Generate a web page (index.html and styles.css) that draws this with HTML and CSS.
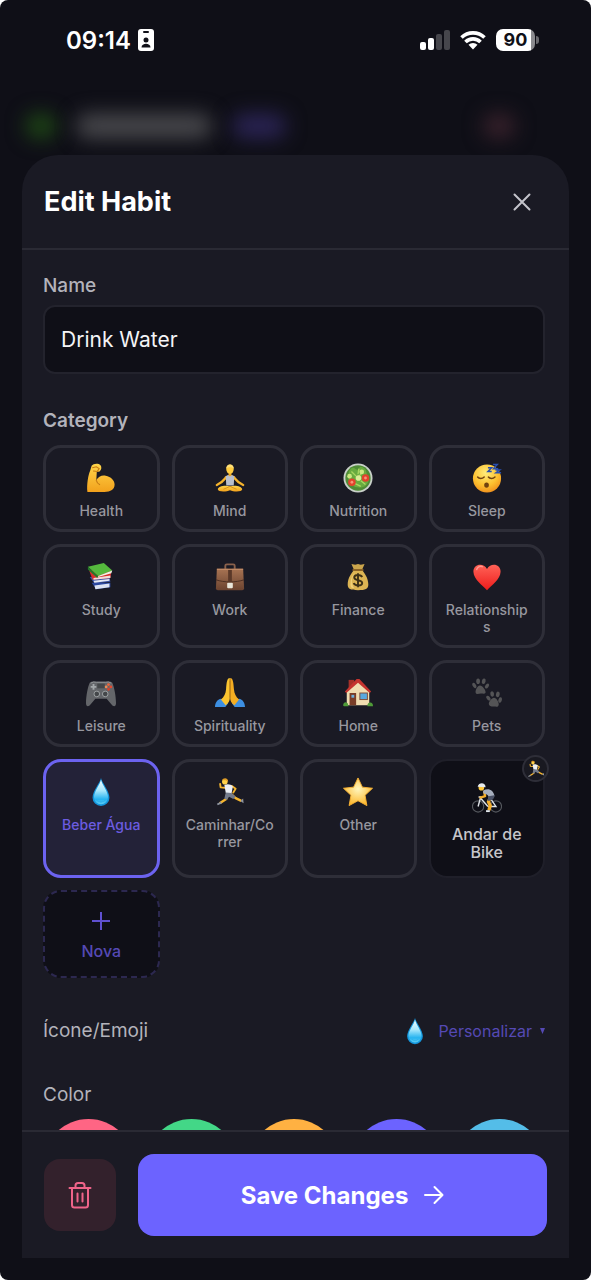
FILE: index.html
```
<!DOCTYPE html>
<html lang="en">
<head>
	<meta charset="UTF-8">
	<meta name="viewport" content="width=device-width, initial-scale=1">
	<title>Edit Habit</title>
	<link rel="stylesheet" href="styles.css">
</head>
<body>
	<!-- gradients and emoji used more than once -->
	<svg class="defs" aria-hidden="true">
		<defs>
			<linearGradient id="skin" x1="0" y1="0" x2="0" y2="1">
				<stop offset="0" stop-color="#ffd54a"/>
				<stop offset="1" stop-color="#f2a11c"/>
			</linearGradient>
			<linearGradient id="water" x1="0" y1="0" x2="0" y2="1">
				<stop offset="0" stop-color="#f2fdff"/>
				<stop offset="0.45" stop-color="#a5e6fb"/>
				<stop offset="0.8" stop-color="#25b3f0"/>
				<stop offset="1" stop-color="#5ccdf5"/>
			</linearGradient>
			<linearGradient id="heart" x1="0" y1="0" x2="0" y2="1">
				<stop offset="0" stop-color="#ff6257"/>
				<stop offset="1" stop-color="#ee1c1b"/>
			</linearGradient>
			<linearGradient id="leather" x1="0" y1="0" x2="0" y2="1">
				<stop offset="0" stop-color="#a87453"/>
				<stop offset="1" stop-color="#6b4330"/>
			</linearGradient>
			<radialGradient id="star" cx="0.5" cy="0.4" r="0.6">
				<stop offset="0" stop-color="#fff6bd"/>
				<stop offset="1" stop-color="#fcb72b"/>
			</radialGradient>
			<radialGradient id="face" cx="0.45" cy="0.3" r="0.75">
				<stop offset="0" stop-color="#ffec7a"/>
				<stop offset="0.6" stop-color="#fdc02f"/>
				<stop offset="1" stop-color="#ee8a1b"/>
			</radialGradient>
		</defs>
		<symbol id="drop" viewBox="0 0 32 32">
			<path d="M16 1C17 6 25 15 25 22a9 9 0 0 1-18 0C7 15 15 6 16 1z" fill="#1596dc"/>
			<path d="M16 3c1 5 7.500 12.500 7.500 18.500a7.500 7.500 0 0 1-15 0C8.500 15.500 15 8 16 3z" fill="url(#water)"/>
			<path d="M10.500 23.500c2 4.500 9 4.500 11 0-1 2-3 3-5.500 3s-4.500-1-5.500-3z" fill="#0f8fdb"/>
		</symbol>
		<symbol id="runner" viewBox="0 0 32 32">
			<path d="M13 18l-1 5.500-7 4.500" fill="none" stroke="#f5b52e" stroke-width="2.500" stroke-linejoin="round"/>
			<path d="M17 18l5 4.500 6 3" fill="none" stroke="#f5b52e" stroke-width="2.500" stroke-linejoin="round"/>
			<path d="M2 28.500l4-2 1.500 1.500-4.500 2zM27 25.500l3-2.500.5 5z" fill="#8f95a0"/>
			<path d="M11 11.500l-5-.5-.5-3.500M18 9.500l4 3-2.500 4" fill="none" stroke="#f5b52e" stroke-width="2" stroke-linecap="round" stroke-linejoin="round"/>
			<path d="M10 8.500c3-1.500 7-1 9 1.500l-1.500 8-6-1z" fill="#edf0f5"/>
			<path d="M11.500 16.500l6 .5 4.500 4-2.500 2.500-4.500-2.500-2.500 3.500-2.500-1.500z" fill="#737b8c"/>
			<circle cx="10.500" cy="5" r="3" fill="#ffd24a"/>
			<path d="M7.500 3.500c1-3.500 7-3 6.500 1.500l-2.500-1.500z" fill="#e09d27"/>
		</symbol>
	</svg>

	<div class="phone">
		<header class="status-bar">
			<div class="clock">
				<span>09:14</span>
				<svg width="16" height="22" viewBox="0 0 16 22">
					<rect width="16" height="22" rx="3" fill="#fff"/>
					<rect x="5" y="2" width="6" height="2" rx="1" fill="#101018"/>
					<circle cx="8" cy="11" r="2.500" fill="#101018"/>
					<path d="M3.500 18.500c0-5 9-5 9 0z" fill="#101018"/>
				</svg>
			</div>
			<div class="signals">
				<svg width="30" height="20" viewBox="0 0 30 20">
					<rect x="0" y="12" width="6" height="8" rx="2" fill="#fff"/>
					<rect x="8" y="8" width="6" height="12" rx="2" fill="#fff"/>
					<rect x="16" y="4" width="6" height="16" rx="2" fill="#46464c"/>
					<rect x="24" y="0" width="6" height="20" rx="2" fill="#46464c"/>
				</svg>
				<svg width="26" height="20" viewBox="0 0 26 20">
					<path d="M1.500 7.500a16.500 16.500 0 0 1 23 0M5.500 12a10.500 10.500 0 0 1 15 0" fill="none" stroke="#fff" stroke-width="3.600"/>
					<path d="M13 19.500l-4.500-4.800a6.500 6.500 0 0 1 9 0z" fill="#fff"/>
				</svg>
				<div class="battery"><span class="battery-level">90</span></div>
			</div>
		</header>

		<!-- page header, seen blurred behind the dialog -->
		<div class="backdrop">
			<span class="blur blur-green"></span>
			<span class="blur blur-title"></span>
			<span class="blur blur-violet"></span>
			<span class="blur blur-red"></span>
		</div>

		<main class="modal">
			<div class="modal-header">
				<h1>Edit Habit</h1>
				<button type="button" class="close" aria-label="Close">
					<svg width="18" height="18" viewBox="0 0 18 18"><path d="M1.500 1.500l15 15M16.500 1.500l-15 15"/></svg>
				</button>
			</div>

			<form class="modal-body" id="habit-form">
				<label class="label medium" for="name">Name</label>
				<input class="text-input" type="text" id="name" value="Drink Water">

				<h2 class="label strong">Category</h2>
				<div class="categories">
					<button type="button" class="card">
						<svg class="emoji" viewBox="0 0 32 32">
							<path d="M6 3C8 .5 13 0 15.500 2.500c1.500 2 1 5-1 6.500l-3 .5-.5 9c2-4 6-6 10-5 5.500 1 9.500 5 9.500 9.500 0 5-4 8-11 8H1.500C.500 23 2.500 12 4.500 8z" fill="url(#skin)"/>
							<path d="M7 5l4-1 3 2-2 3-4-.5M11 18.500c.5 2 1.500 3.500 3.500 4.500" fill="none" stroke="#c67b13" stroke-width="1.200" stroke-linecap="round"/>
						</svg>
						<span>Health</span>
					</button>
					<button type="button" class="card">
						<svg class="emoji" viewBox="0 0 32 32">
							<path d="M12 15c-2.500 3-4 6-10 8.500M20 15c2.500 3 4 6 10 8.500" fill="none" stroke="#f5b32d" stroke-width="2.500" stroke-linecap="round"/>
							<path d="M3 28c0-3 8-5 13-3 5-2 13 0 13 3 0 3-9 3-13 1-4 2-13 2-13-1z" fill="url(#skin)"/>
							<path d="M11.500 14c3-2 6-2 9 0l-.5 10h-8z" fill="#b9bfcc"/>
							<path d="M14.500 10h3v4h-3z" fill="#e9a425"/>
							<ellipse cx="16" cy="6.500" rx="4" ry="5" fill="#ffcb3f"/>
							<path d="M12 6c0-6 8-6 8 0-2-2-6-2-8 0z" fill="#ffe07a"/>
							<path d="M9 28l7-3 7 3" fill="none" stroke="#d88e18" stroke-width="1"/>
						</svg>
						<span>Mind</span>
					</button>
					<button type="button" class="card">
						<svg class="emoji" viewBox="0 0 32 32">
							<circle cx="16" cy="16" r="15.500" fill="#c9d0c9"/>
							<circle cx="16" cy="16" r="13.500" fill="#4f8c36"/>
							<path d="M6 10q3-7 7-4t5-2q6 0 7 6t3 7q-2 8-8 9t-10-2q-6-4-4-14z" fill="#68ab3f"/>
							<path d="M9 9l5 5M17 6l-1 6M21 10l-4 4M13 22l6 3M19 19l5 4" stroke="#a8d660" stroke-width="1.500"/>
							<circle cx="9.500" cy="20.500" r="4" fill="#e2422d"/>
							<circle cx="24" cy="16" r="4" fill="#e2422d"/>
							<circle cx="9.500" cy="20.500" r="1.500" fill="#f89376"/>
							<circle cx="24" cy="16" r="1.500" fill="#f89376"/>
							<circle cx="16.500" cy="16" r="3" fill="#d9ed96"/>
							<circle cx="7" cy="14" r="2.500" fill="#cbe780"/>
							<circle cx="20" cy="9.500" r="2.500" fill="#cbe780"/>
						</svg>
						<span>Nutrition</span>
					</button>
					<button type="button" class="card">
						<svg class="emoji" viewBox="0 0 32 32">
							<circle cx="16" cy="16.500" r="15" fill="url(#face)"/>
							<path d="M6 15c1.500 2 5 2 7 0M17.500 15c1.500 2 5 2 7 0" fill="none" stroke="#71420f" stroke-width="1.600" stroke-linecap="round"/>
							<ellipse cx="15.500" cy="23.500" rx="2.500" ry="2.800" fill="#71420f"/>
							<path d="M17 5h4l-4 4h4M22.500 1.500H27L23 6h5M25 7.500h4.500l-4 3H31" fill="none" stroke="#294fae" stroke-width="1.600"/>
						</svg>
						<span>Sleep</span>
					</button>

					<button type="button" class="card">
						<svg class="emoji" viewBox="0 0 32 32">
							<path d="M6 22l5 7 15-2v-5z" fill="#2b489f"/>
							<path d="M9 25l16-2v4l-15 2z" fill="#dce3f2"/>
							<path d="M4 16l5 7 17-2-1-5z" fill="#3a52a5"/>
							<path d="M8 20l17-2v2L9 22z" fill="#e7eaf2"/>
							<path d="M3 8l4 11 19-2 1-7z" fill="#d92d2b"/>
							<path d="M8 17l18-2.500V17L8 19z" fill="#f0dfdb"/>
							<path d="M2 5l17-4 9 8-15 6z" fill="#55b83d"/>
							<path d="M2 5l11 10-1 2L2 8z" fill="#23782a"/>
							<path d="M13 15l15-6-1 3-14 4z" fill="#eef3e9"/>
						</svg>
						<span>Study</span>
					</button>
					<button type="button" class="card">
						<svg class="emoji" viewBox="0 0 32 32">
							<path d="M11 8V4q0-1.500 1.500-1.500h7Q21 2.500 21 4v4" fill="none" stroke="#89604b" stroke-width="2"/>
							<path d="M2 7h28l1 21q0 2-2 2H3q-2 0-2-2z" fill="url(#leather)"/>
							<path d="M1 19c9 3 21 3 30 0" fill="none" stroke="#4b2e22" stroke-width="1"/>
							<path d="M14 7h4v15h-4z" fill="#5a3828"/>
							<rect x="13" y="22" width="6" height="6" rx="1" fill="#e9e5da"/>
							<path d="M2 8h28" stroke="#c28c67" stroke-width="1"/>
						</svg>
						<span>Work</span>
					</button>
					<button type="button" class="card">
						<svg class="emoji" viewBox="0 0 32 32">
							<path d="M9 2l4 1 3-1 3 1 4-1-3 7h-8z" fill="#cba54c"/>
							<path d="M12 8h8c3 4 7 9 7 16 0 5-3 6-11 6S5 29 5 24c0-7 4-12 7-16z" fill="#dcb453"/>
							<path d="M8 24c0-6 2-10 5-13-5 7-4 13-1 17-3 0-4-1-4-4z" fill="#f1d279"/>
							<path d="M11 8.500h10" stroke="#8c6325" stroke-width="2" stroke-linecap="round"/>
							<path d="M20.500 16c-1.500-3-8.500-3-8.500.5 0 4 8.500 2 8.500 6 0 3.500-8 3.500-9 0M16 12v15" fill="none" stroke="#3c3017" stroke-width="2"/>
						</svg>
						<span>Finance</span>
					</button>
					<button type="button" class="card">
						<svg class="emoji" viewBox="0 0 32 32">
							<path d="M16 30C11 25 2 19 1.500 10.500 1.500 2 12 .5 16 7.500 20 .5 30.500 2 30.500 10.500 30 19 21 25 16 30z" fill="url(#heart)"/>
							<path d="M5 8c1-3 4-4 6-3" fill="none" stroke="#ff9b90" stroke-width="1.500" stroke-linecap="round"/>
						</svg>
						<span>Relationships</span>
					</button>

					<button type="button" class="card">
						<svg class="emoji" viewBox="0 0 32 32">
							<path d="M4 5q2-2 7-1h10q5-1 7 1c2 4 4 14 4 22 0 4-3 4-5 1l-5-6H10l-5 6c-2 3-5 3-5-1C0 19 2 9 4 5z" fill="#64666a"/>
							<path d="M5 5.500q3-2 6-1h10q3-1 6 1" fill="none" stroke="#94979b" stroke-width="1"/>
							<path d="M12 6h8v5h-8z" fill="#44474a"/>
							<path d="M8 6.500v6M5 9.500h6" stroke="#a3a7aa" stroke-width="2"/>
							<circle cx="24" cy="7" r="1.500" fill="#f0643a"/>
							<circle cx="24" cy="12" r="1.500" fill="#d8422d"/>
							<circle cx="21.500" cy="9.500" r="1.500" fill="#f08a54"/>
							<circle cx="26.500" cy="9.500" r="1.500" fill="#e34a31"/>
							<circle cx="11.500" cy="17" r="3" fill="#44474a" stroke="#a0a4a6"/>
							<circle cx="20.500" cy="17" r="3" fill="#44474a" stroke="#a0a4a6"/>
						</svg>
						<span>Leisure</span>
					</button>
					<button type="button" class="card">
						<svg class="emoji" viewBox="0 0 32 32">
							<path d="M6 22c-4 1-6 5-6 9h11l3-4zM26 22c4 1 6 5 6 9H21l-3-4z" fill="#3d8fe2"/>
							<path d="M15.800 0c-3 0-3.500 5-4 12-.5 5-2 8-5.500 11l5 6c4-3 4.500-5 4.500-9z" fill="#fbc52f"/>
							<path d="M16.200 0c3 0 3.500 5 4 12 .5 5 2 8 5.500 11l-5 6c-4-3-4.500-5-4.500-9z" fill="#f4ad22"/>
							<path d="M16 3v18" stroke="#bd7b14" stroke-width="1"/>
						</svg>
						<span>Spirituality</span>
					</button>
					<button type="button" class="card">
						<svg class="emoji" viewBox="0 0 32 32">
							<path d="M6 2h6v9H6z" fill="#a53028"/>
							<path d="M4 14L16 3l12 11v15H4z" fill="#f0ddb1"/>
							<path d="M2 14.500L14.500 1h3L30 14.500 28.500 16 16 5 3.500 16z" fill="#c5342f"/>
							<rect x="7" y="16" width="7" height="13" fill="#793e28"/>
							<rect x="9" y="18" width="3" height="3" fill="#6eb0dc"/>
							<rect x="18" y="16" width="8" height="7" fill="#59a9de" stroke="#7f4b35"/>
							<path d="M0 29q1-5 5-2l1 3H1zM26 30q0-4 3-4t3 4z" fill="#4f9b38"/>
						</svg>
						<span>Home</span>
					</button>
					<button type="button" class="card">
						<svg class="emoji" viewBox="0 0 32 32" fill="#545456">
							<ellipse cx="2.500" cy="8" rx="1.800" ry="3" transform="rotate(-30 2.500 8)"/>
							<ellipse cx="6.500" cy="3.500" rx="2" ry="3"/>
							<ellipse cx="12.500" cy="3.500" rx="2" ry="3" transform="rotate(15 12.500 3.500)"/>
							<ellipse cx="16" cy="8.500" rx="1.800" ry="3" transform="rotate(35 16 8.500)"/>
							<path d="M8.500 8c2.500 0 6.500 5 6 7.500-.5 2-3 1-5 1s-4.500 1.500-5.500-.5C3 13.500 6 8 8.500 8z"/>
							<ellipse cx="17.500" cy="21.500" rx="1.800" ry="3" transform="rotate(-40 17.500 21.500)"/>
							<ellipse cx="21.500" cy="17" rx="2" ry="3" transform="rotate(-5 21.500 17)"/>
							<ellipse cx="27.500" cy="17.500" rx="2" ry="3" transform="rotate(15 27.500 17.500)"/>
							<ellipse cx="30" cy="23.500" rx="1.800" ry="3" transform="rotate(15 30 23.500)"/>
							<path d="M23.500 21c2.500 0 5.500 5 5 7.500-.5 3-3 2-5 2s-5 0-5.500-2.500c-.5-2.500 3-7 5.500-7z"/>
						</svg>
						<span>Pets</span>
					</button>

					<button type="button" class="card selected" aria-pressed="true">
						<svg class="emoji"><use href="#drop"/></svg>
						<span>Beber Água</span>
					</button>
					<button type="button" class="card">
						<svg class="emoji"><use href="#runner"/></svg>
						<span>Caminhar/Correr</span>
					</button>
					<button type="button" class="card">
						<svg class="emoji" viewBox="0 0 32 32">
							<path d="M16 1l4.700 9.800L31.500 12l-8 7.500 2 11L16 25.300 6.500 30.500l2-11L.5 12l10.800-1.200z" fill="url(#star)" stroke="#f9b233" stroke-width="1" stroke-linejoin="round"/>
						</svg>
						<span>Other</span>
					</button>
					<div class="custom-wrap">
						<button type="button" class="card custom">
							<svg class="emoji" viewBox="0 0 32 32">
								<circle cx="6.500" cy="25" r="6" fill="none" stroke="#55585e" stroke-width="1.200"/>
								<circle cx="25.500" cy="25" r="6" fill="none" stroke="#55585e" stroke-width="1.200"/>
								<path d="M6.500 25L9 16l8 9M7 15h3M17 25h8.500L20 17" fill="none" stroke="#dfe3e8" stroke-width="1.500"/>
								<path d="M20 15l-2.500 5 2 4-1.500 5" fill="none" stroke="#f4ae2c" stroke-width="3.500" stroke-linejoin="round"/>
								<path d="M13 9.500l1 4.500-5 1.500" fill="none" stroke="#f4ae2c" stroke-width="2.500" stroke-linecap="round" stroke-linejoin="round"/>
								<path d="M12 8c5-3 11-1 12 6l-6 2c0-3-2-4-6-5z" fill="#a6aebd"/>
								<path d="M17.500 14l6.500-1c0 4-3 6-7.500 6z" fill="#4a5166"/>
								<circle cx="10" cy="5" r="3" fill="#ffc83d"/>
								<path d="M6 4c1-5 8.500-5 8.500.5z" fill="#e6ebf0"/>
								<path d="M15 30h4" stroke="#e6ebf0" stroke-width="2"/>
							</svg>
							<span>Andar de Bike</span>
						</button>
						<button type="button" class="badge" aria-label="Edit Andar de Bike">
							<svg width="18" height="18"><use href="#runner"/></svg>
						</button>
					</div>

					<button type="button" class="card new">
						<svg width="18" height="18" viewBox="0 0 18 18"><path d="M9 0v18M0 9h18"/></svg>
						<span>Nova</span>
					</button>
				</div>

				<div class="icon-row">
					<h2 class="label">Ícone/Emoji</h2>
					<button type="button" class="customize">
						<svg class="icon-preview"><use href="#drop"/></svg>
						<span>Personalizar</span>
						<svg width="5" height="6" viewBox="0 0 5 6"><path d="M0 0h5L2.500 6z"/></svg>
					</button>
				</div>

				<h2 class="label">Color</h2>
				<div class="colors">
					<button type="button" class="color pink" aria-label="Pink"></button>
					<button type="button" class="color green" aria-label="Green"></button>
					<button type="button" class="color orange" aria-label="Orange"></button>
					<button type="button" class="color violet" aria-label="Violet"></button>
					<button type="button" class="color blue" aria-label="Blue"></button>
				</div>
			</form>

			<footer class="modal-footer">
				<button type="button" class="delete" aria-label="Delete habit">
					<svg width="24" height="28" viewBox="0 0 24 28">
						<path d="M1.500 7h21M4 7v17q0 2.500 2.500 2.500h11q2.500 0 2.500-2.500V7M7.500 7V4.500q0-2.500 2.500-2.500h4q2.500 0 2.500 2.500V7M9.500 12.500v8M14.500 12.500v8"/>
					</svg>
				</button>
				<button type="submit" form="habit-form" class="save">
					<span>Save Changes</span>
					<svg width="20" height="20" viewBox="0 0 20 20"><path d="M1 10h17M10.500 2l8 8-8 8"/></svg>
				</button>
			</footer>
		</main>
	</div>
</body>
</html>
```
FILE: styles.css
```
* {
	box-sizing: border-box;
	margin: 0;
	padding: 0;
}
html {
	background: #fff;
}
body {
	font-family: Inter, "Liberation Sans", sans-serif;
	color: #fff;
}
button {
	border: 0;
	background: none;
	color: inherit;
	font: inherit;
	cursor: pointer;
}
svg {
	display: block;
	flex-shrink: 0;
}
.defs {
	position: absolute;
	width: 0;
	height: 0;
}
.phone {
	display: flex;
	flex-direction: column;
	height: 100vh;
	padding-bottom: 22px;
	border-radius: 8px;
	background: #0f0f17;
	overflow: hidden;
}

/* status bar */
.status-bar {
	display: flex;
	justify-content: space-between;
	align-items: center;
	height: 80px;
	padding: 0 56px 0 66px;
}
.clock,
.signals {
	display: flex;
	align-items: center;
}
.clock {
	gap: 7px;
	font-size: 24px;
	font-weight: 600;
}
.signals {
	gap: 10px;
}
.battery {
	position: relative;
	width: 39px;
	height: 22px;
	border-radius: 7px;
	background: linear-gradient(to right, #fff 90%, #8a8a8e 90%);
	color: #101018;
	font-size: 18px;
	font-weight: 700;
	line-height: 22px;
	text-align: center;
}
.battery::after {
	content: "";
	position: absolute;
	top: 7px;
	right: -4px;
	width: 3px;
	height: 8px;
	border-radius: 0 3px 3px 0;
	background: #6a6a6f;
}

/* blurred page header */
.backdrop {
	display: flex;
	align-items: center;
	gap: 20px;
	height: 75px;
	padding: 16px 76px 0 26px;
}
.blur {
	height: 24px;
	border-radius: 12px;
	filter: blur(10px);
}
.blur-green {
	width: 30px;
	background: #1f4a15;
}
.blur-title {
	width: 136px;
	background: #4a4a4e;
}
.blur-violet {
	width: 54px;
	background: #2b2456;
}
.blur-red {
	width: 32px;
	margin-left: auto;
	background: #3a222c;
}

/* dialog */
.modal {
	position: relative;
	display: flex;
	flex: 1;
	flex-direction: column;
	min-height: 0;
	margin: 0 22px;
	border-radius: 36px 36px 0 0;
	background: #1a1a24;
}
.modal-header {
	display: flex;
	justify-content: space-between;
	align-items: center;
	height: 95px;
	padding: 0 30px 0 22px;
	border-bottom: 2px solid #2a2a34;
}
.modal-header h1 {
	font-size: 27px;
	font-weight: 700;
}
.close {
	padding: 8px;
}
.close path {
	fill: none;
	stroke: #c4c4cb;
	stroke-width: 2;
	stroke-linecap: round;
}
.modal-body {
	flex: 1;
	min-height: 0;
	padding: 24px 24px 0 21px;
	overflow: hidden;
}
.label {
	display: block;
	color: #b3b3bb;
	font-size: 19px;
	font-weight: 400;
	line-height: 24px;
}
.medium {
	font-weight: 500;
}
.strong {
	font-weight: 600;
}
.text-input {
	display: block;
	width: 100%;
	height: 69px;
	margin: 7px 0 35px;
	padding: 0 16px;
	border: 2px solid #23232d;
	border-radius: 12px;
	outline: 0;
	background: #0f0f17;
	color: #f4f4f6;
	font: 400 21px Inter, "Liberation Sans", sans-serif;
}

/* categories */
.categories {
	display: grid;
	grid-template-columns: repeat(4, 1fr);
	gap: 12px;
	margin: 12px 0 39px;
}
.card {
	display: flex;
	flex-direction: column;
	align-items: center;
	gap: 8px;
	width: 100%;
	min-width: 0;
	padding: 14px 11px 10px;
	border: 3px solid #2e2e38;
	border-radius: 18px;
	color: #97979f;
	font-size: 14px;
	font-weight: 500;
	line-height: 17px;
}
.card span {
	max-width: 100%;
	overflow-wrap: anywhere;
}
.emoji {
	width: 32px;
	height: 32px;
	padding: 1px;
}
.selected {
	border-color: #6c63f0;
	background: #232238;
	color: #6c5ce0;
}
.custom-wrap {
	position: relative;
}
.custom {
	gap: 11px;
	padding: 21px 12px 15px;
	border: 2px solid #1f1f29;
	background: #0f0f17;
	color: #c6c6cb;
	font-size: 16px;
	line-height: 18px;
}
.badge {
	position: absolute;
	top: -4px;
	right: -4px;
	display: flex;
	justify-content: center;
	align-items: center;
	width: 27px;
	height: 27px;
	border: 2px solid #2e2e38;
	border-radius: 50%;
	background: #191921;
}
.new {
	justify-content: center;
	gap: 12px;
	height: 88px;
	border: 2px dashed #2c2850;
	background: #0f0f17;
	color: #5549b4;
	font-size: 16px;
	line-height: 18px;
}
.new path {
	stroke: #5f50d0;
	stroke-width: 2;
}

/* icon and colour */
.icon-row {
	display: flex;
	justify-content: space-between;
	align-items: center;
	margin-bottom: 38px;
}
.customize {
	display: flex;
	align-items: center;
	gap: 8px;
	color: #5549b4;
	font-size: 16px;
	line-height: 24px;
}
.customize path {
	fill: #5549b4;
}
.icon-preview {
	width: 30px;
	height: 28px;
}
.colors {
	display: grid;
	grid-template-columns: repeat(5, 1fr);
	gap: 12px;
	margin-top: 12px;
}
.color {
	aspect-ratio: 1;
	border-radius: 50%;
}
.pink {
	background: #ff6584;
}
.green {
	background: #43d787;
}
.orange {
	background: #ffb142;
}
.violet {
	background: #6c63ff;
}
.blue {
	background: #54bde8;
}

/* footer buttons */
.modal-footer {
	display: flex;
	align-items: center;
	gap: 22px;
	padding: 22px;
	border-top: 2px solid #2a2a34;
}
.delete {
	display: flex;
	justify-content: center;
	align-items: center;
	width: 72px;
	height: 72px;
	border-radius: 16px;
	background: #33212c;
}
.delete path {
	fill: none;
	stroke: #f0648a;
	stroke-width: 2;
	stroke-linecap: round;
}
.save {
	display: flex;
	flex: 1;
	justify-content: center;
	align-items: center;
	gap: 16px;
	height: 82px;
	border-radius: 16px;
	background: #6c63ff;
	font-size: 24px;
	font-weight: 700;
}
.save path {
	fill: none;
	stroke: #fff;
	stroke-width: 2;
	stroke-linecap: round;
	stroke-linejoin: round;
}
```
